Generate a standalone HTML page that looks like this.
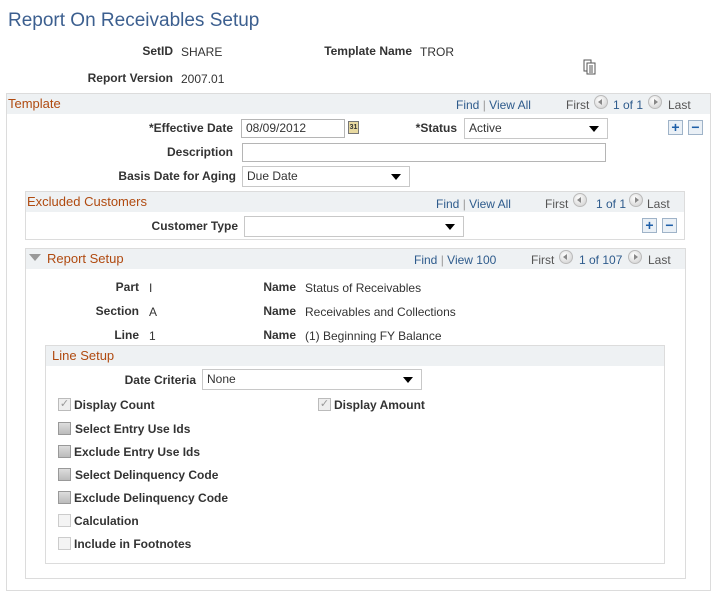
<!DOCTYPE html>
<html><head><style>
*{margin:0;padding:0;box-sizing:border-box}
body{width:719px;height:595px;background:#fff;font-family:"Liberation Sans",Arial,sans-serif;font-size:12px;color:#333;position:relative;overflow:hidden}
.a{position:absolute;white-space:nowrap;line-height:14px}
.l{font-weight:bold;color:#333;text-align:right}
.v{color:#333}
.box{position:absolute;border:1px solid #dcdcdc}
.hd{position:absolute;left:0;top:0;right:0;height:20px;background:#eef1f3}
.ht{color:#b04a10;font-size:13px}
.lk{color:#2e5b8c}
.g{color:#555}
.inp{position:absolute;border:1px solid #b5b5b5;background:#fff;height:19px;padding-left:4px;line-height:17px;color:#333}
.sel{position:absolute;border:1px solid #c8c8c8;background:#fff;height:21px;padding-left:4px;line-height:19px;color:#333}
.sel:after{content:"";position:absolute;right:8px;top:7px;border-left:5px solid transparent;border-right:5px solid transparent;border-top:6px solid #000}
.circ{position:absolute;width:14px;height:14px;border-radius:50%;background:radial-gradient(circle at 40% 35%,#fff,#ccc);border:1px solid #bbb}
.circ.p:after{content:"";position:absolute;left:3px;top:3px;border-top:3px solid transparent;border-bottom:3px solid transparent;border-right:4px solid #888}
.circ.n:after{content:"";position:absolute;left:5px;top:3px;border-top:3px solid transparent;border-bottom:3px solid transparent;border-left:4px solid #888}
.pm{position:absolute;width:15px;height:15px;border:1px solid #9fb3c8;background:#eaf0f6;color:#1f5fa8;font-weight:bold;font-size:14px;line-height:12px;text-align:center}
.cb{position:absolute;width:13px;height:13px;border:1px solid #999;background:linear-gradient(#ddd,#bbb)}
.cb.e{background:#f4f4f4;border-color:#ccc}
.cb.c{background:#eee;border-color:#bbb;color:#999;font-size:11px;line-height:11px;text-align:center}
.cl{font-weight:bold;color:#333}
</style></head><body>
<div class="a" style="left:8px;top:10px;font-size:19px;line-height:22px;color:#3c5f8f">Report On Receivables Setup</div>
<div class="a l" style="right:546px;top:44px">SetID</div><div class="a v" style="left:181px;top:45px">SHARE</div>
<div class="a l" style="right:307px;top:44px">Template Name</div><div class="a v" style="left:420px;top:45px">TROR</div>
<div class="a l" style="right:546px;top:71px">Report Version</div><div class="a v" style="left:181px;top:72px">2007.01</div>
<svg class="a" style="left:583px;top:59px" width="14" height="16" viewBox="0 0 14 16"><path d="M1 1h7v11H1z" fill="#fff" stroke="#555"/><path d="M4 4h8v11H4z" fill="#fff" stroke="#555"/><path d="M6 7h4M6 9h4M6 11h4M6 13h4" stroke="#555"/></svg>

<div class="box" style="left:6px;top:93px;width:705px;height:498px">
 <div class="hd"></div>
 <div class="a ht" style="left:1px;top:3px">Template</div>
 <div class="a" style="left:449px;top:4px"><span class="lk">Find</span> <span style="color:#999">|</span> <span class="lk">View All</span></div>
 <div class="a g" style="left:559px;top:4px">First</div><div class="circ p" style="left:587px;top:1px"></div>
 <div class="a lk" style="left:606px;top:4px">1 of 1</div><div class="circ n" style="left:641px;top:1px"></div>
 <div class="a g" style="left:661px;top:4px">Last</div>
</div>
<div class="a l" style="right:486px;top:121px">*Effective Date</div>
<div class="inp" style="left:241px;top:119px;width:104px">08/09/2012</div>
<div class="a" style="left:348px;top:121px;width:11px;height:13px;background:#e8d9a0;border:1px solid #777;font-size:7px;line-height:11px;text-align:center;font-weight:bold">31</div>
<div class="a l" style="right:262px;top:121px">*Status</div>
<div class="sel" style="left:464px;top:118px;width:144px">Active</div>
<div class="pm" style="left:668px;top:120px">+</div><div class="pm" style="left:688px;top:120px">−</div>
<div class="a l" style="right:486px;top:145px">Description</div>
<div class="inp" style="left:242px;top:143px;width:364px"></div>
<div class="a l" style="right:483px;top:169px">Basis Date for Aging</div>
<div class="sel" style="left:242px;top:166px;width:168px">Due Date</div>

<div class="box" style="left:25px;top:191px;width:660px;height:49px">
 <div class="hd"></div>
 <div class="a ht" style="left:1px;top:3px">Excluded Customers</div>
 <div class="a" style="left:410px;top:5px"><span class="lk">Find</span> <span style="color:#999">|</span> <span class="lk">View All</span></div>
 <div class="a g" style="left:519px;top:5px">First</div><div class="circ p" style="left:547px;top:1px"></div>
 <div class="a lk" style="left:570px;top:5px">1 of 1</div><div class="circ n" style="left:603px;top:1px"></div>
 <div class="a g" style="left:621px;top:5px">Last</div>
</div>
<div class="a l" style="right:481px;top:219px">Customer Type</div>
<div class="sel" style="left:244px;top:216px;width:220px"></div>
<div class="pm" style="left:642px;top:218px">+</div><div class="pm" style="left:662px;top:218px">−</div>

<div class="box" style="left:25px;top:248px;width:661px;height:331px">
 <div class="hd"></div>
 <div class="a" style="left:3px;top:5px;border-left:6px solid transparent;border-right:6px solid transparent;border-top:7px solid #999;width:0;height:0"></div>
 <div class="a ht" style="left:21px;top:3px">Report Setup</div>
 <div class="a" style="left:388px;top:4px"><span class="lk">Find</span> <span style="color:#999">|</span> <span class="lk">View 100</span></div>
 <div class="a g" style="left:505px;top:4px">First</div><div class="circ p" style="left:533px;top:1px"></div>
 <div class="a lk" style="left:553px;top:4px">1 of 107</div><div class="circ n" style="left:602px;top:1px"></div>
 <div class="a g" style="left:622px;top:4px">Last</div>
</div>
<div class="a l" style="right:580px;top:280px">Part</div><div class="a v" style="left:149px;top:281px">I</div>
<div class="a l" style="right:423px;top:280px">Name</div><div class="a v" style="left:305px;top:281px">Status of Receivables</div>
<div class="a l" style="right:580px;top:304px">Section</div><div class="a v" style="left:149px;top:305px">A</div>
<div class="a l" style="right:423px;top:304px">Name</div><div class="a v" style="left:305px;top:305px">Receivables and Collections</div>
<div class="a l" style="right:580px;top:328px">Line</div><div class="a v" style="left:149px;top:329px">1</div>
<div class="a l" style="right:423px;top:328px">Name</div><div class="a v" style="left:305px;top:329px">(1) Beginning FY Balance</div>

<div class="box" style="left:45px;top:345px;width:620px;height:219px">
 <div class="hd"></div>
 <div class="a ht" style="left:6px;top:3px">Line Setup</div>
</div>
<div class="a l" style="right:523px;top:373px">Date Criteria</div>
<div class="sel" style="left:202px;top:369px;width:220px">None</div>
<div class="cb c" style="left:58px;top:398px">✓</div><div class="a cl" style="left:74px;top:398px">Display Count</div>
<div class="cb c" style="left:318px;top:398px">✓</div><div class="a cl" style="left:334px;top:398px">Display Amount</div>
<div class="cb" style="left:58px;top:422px"></div><div class="a cl" style="left:75px;top:422px">Select Entry Use Ids</div>
<div class="cb" style="left:58px;top:445px"></div><div class="a cl" style="left:74px;top:445px">Exclude Entry Use Ids</div>
<div class="cb" style="left:58px;top:468px"></div><div class="a cl" style="left:75px;top:468px">Select Delinquency Code</div>
<div class="cb" style="left:58px;top:491px"></div><div class="a cl" style="left:74px;top:491px">Exclude Delinquency Code</div>
<div class="cb e" style="left:58px;top:514px"></div><div class="a cl" style="left:74px;top:514px">Calculation</div>
<div class="cb e" style="left:58px;top:537px"></div><div class="a cl" style="left:74px;top:537px">Include in Footnotes</div>
</body></html>
